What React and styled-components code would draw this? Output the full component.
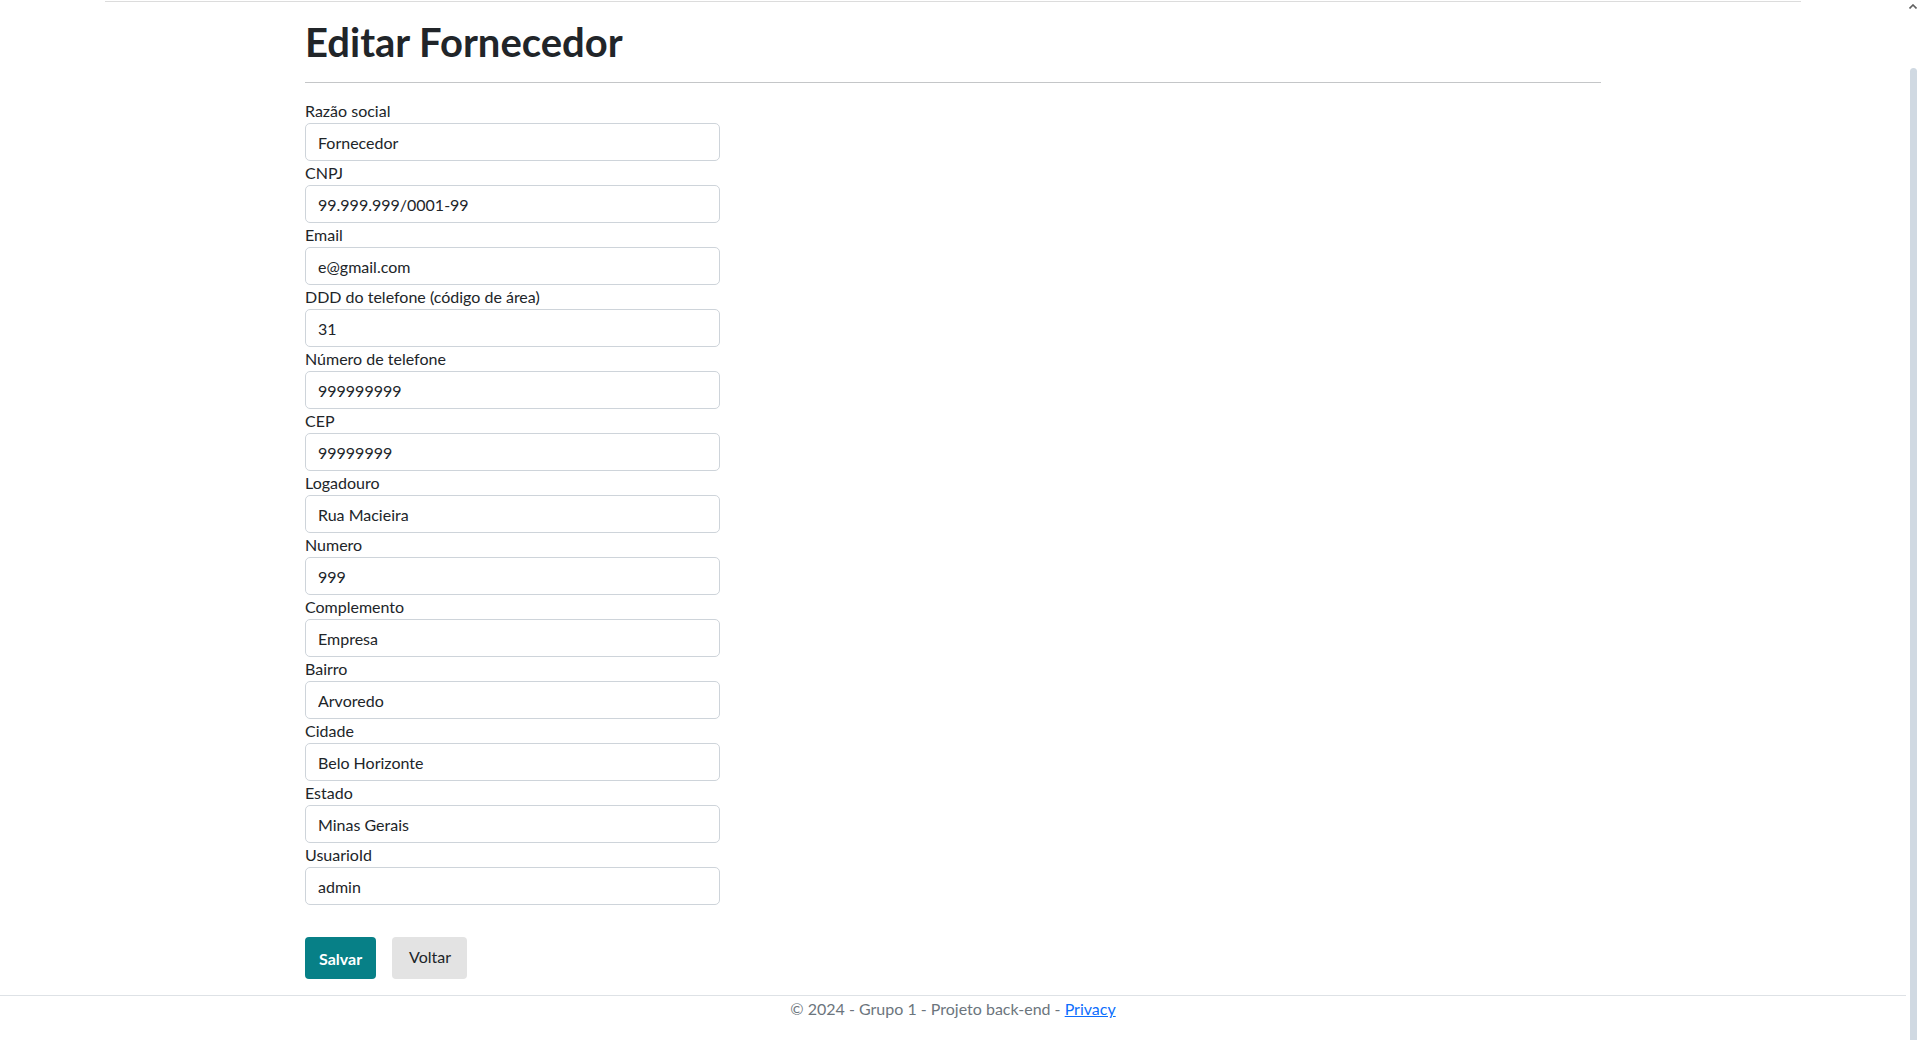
import React from "react";
import styled, { createGlobalStyle } from "styled-components";

const FIELDS = [
  { label: "Razão social", value: "Fornecedor" },
  { label: "CNPJ", value: "99.999.999/0001-99" },
  { label: "Email", value: "e@gmail.com" },
  { label: "DDD do telefone (código de área)", value: "31" },
  { label: "Número de telefone", value: "999999999" },
  { label: "CEP", value: "99999999" },
  { label: "Logadouro", value: "Rua Macieira" },
  { label: "Numero", value: "999" },
  { label: "Complemento", value: "Empresa" },
  { label: "Bairro", value: "Arvoredo" },
  { label: "Cidade", value: "Belo Horizonte" },
  { label: "Estado", value: "Minas Gerais" },
  { label: "UsuarioId", value: "admin" },
];

const GlobalStyle = createGlobalStyle`
  * { box-sizing: border-box; }
  body {
    margin: 0;
    font-family: Lato, "Open Sans", sans-serif;
    font-size: 16px;
    line-height: 1.5;
    color: #212529;
    background: #fff;
  }
`;

export default function App() {
  return (
    <>
      <GlobalStyle />
      <Page>
        <Main>
          <HeaderEdge />
          <Container>
            <Title>Editar Fornecedor</Title>
            <Rule />
            <Form onSubmit={(e) => e.preventDefault()}>
              {FIELDS.map((field) => (
                <Field key={field.label}>
                  <Label>{field.label}</Label>
                  <Input defaultValue={field.value} />
                </Field>
              ))}
              <Actions>
                <SaveButton type="submit">Salvar</SaveButton>
                <BackButton href="#">Voltar</BackButton>
              </Actions>
            </Form>
          </Container>
          <Footer>
            © 2024 - Grupo 1 - Projeto back-end - <FooterLink href="#">Privacy</FooterLink>
          </Footer>
        </Main>
        <ScrollTrack>
          <ScrollArrow viewBox="0 0 8 5">
            <path d="M0.5 4.5 L4 1 L7.5 4.5" fill="none" stroke="#606060" strokeWidth="1.6" />
          </ScrollArrow>
          <ScrollThumb />
        </ScrollTrack>
      </Page>
    </>
  );
}

const Page = styled.div`
  display: flex;
  height: 1040px;
  overflow: hidden;
`;

const Main = styled.div`
  flex: 1;
  display: flex;
  flex-direction: column;
`;

const HeaderEdge = styled.div`
  width: 1696px;
  height: 2px;
  margin: 0 auto;
  border-bottom: 1px solid #dcdcdc;
`;

const Container = styled.div`
  width: 1296px;
  margin: 0 auto;
  flex: 1;
`;

const Title = styled.h1`
  margin: 16px 0 0;
  font-size: 40px;
  font-weight: 700;
  line-height: 48px;
  color: #212529;
`;

const Rule = styled.hr`
  margin: 16px 0;
  border: 0;
  border-top: 1px solid #c4c6c8;
`;

const Form = styled.form`
  display: flex;
  flex-direction: column;
`;

const Field = styled.div`
  display: flex;
  flex-direction: column;
  width: 415px;
`;

const Label = styled.label`
  display: block;
  line-height: 24px;
  color: #212529;
`;

const Input = styled.input`
  display: block;
  width: 100%;
  height: 38px;
  padding: 6px 12px;
  font-family: inherit;
  font-size: 16px;
  line-height: 24px;
  color: #212529;
  background: #fff;
  border: 1px solid #ced4da;
  border-radius: 5px;
  outline: none;
`;

const Actions = styled.div`
  display: flex;
  align-items: flex-start;
  gap: 16px;
  margin-top: 32px;
`;

const SaveButton = styled.button`
  height: 42px;
  padding: 0 14px;
  font-family: inherit;
  font-size: 16px;
  font-weight: 700;
  color: #fff;
  background: #078087;
  border: 0;
  border-radius: 4px;
  cursor: pointer;
`;

const BackButton = styled.a`
  display: flex;
  align-items: center;
  height: 42px;
  padding: 0 16px 3px 17px;
  font-size: 16px;
  color: #212529;
  background: #e3e3e3;
  border-radius: 4px;
  text-decoration: none;
`;

const Footer = styled.footer`
  height: 45px;
  padding-top: 1px;
  border-top: 1px solid #dee2e6;
  text-align: center;
  line-height: 24px;
  color: #6c757d;
`;

const FooterLink = styled.a`
  color: #0d6efd;
  text-decoration: underline;
`;

const ScrollTrack = styled.div`
  width: 13px;
  display: flex;
  flex-direction: column;
  align-items: center;
  padding-top: 4px;
`;

const ScrollArrow = styled.svg`
  width: 8px;
  height: 5px;
  margin-left: 1px;
`;

const ScrollThumb = styled.div`
  width: 7px;
  flex: 1;
  margin-top: 59px;
  margin-left: 1px;
  background: #d0d9e2;
  border-radius: 4px 4px 0 0;
`;
